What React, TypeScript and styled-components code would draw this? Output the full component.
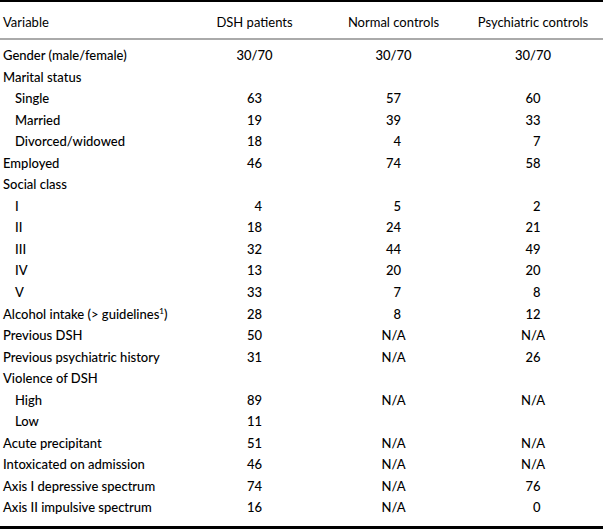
import styled, { createGlobalStyle } from 'styled-components';

const GlobalStyle = createGlobalStyle`
  html, body {
    margin: 0;
    padding: 0;
    background: #fff;
  }
  body {
    font-family: Lato, "Open Sans", sans-serif;
    color: #000;
  }
`

const Table = styled.div`
  width: 603px;
  border-top: 2px solid #000;
  border-bottom: 3px solid #000;
  font-size: 13px;
  font-weight: 500;
`

const Row = styled.div`
  display: grid;
  grid-template-columns: 185px 139px 139px 1fr;
  height: 21.55px;
  line-height: 21.55px;
  white-space: nowrap;
`

const HeaderRow = styled(Row)`
  height: 38px;
  line-height: 36px;
  padding-top: 2px;
  box-sizing: border-box;
  border-bottom: 2px solid #aaa;
  font-weight: 400;
`

const Body = styled.div`
  padding: 5px 0 7px;
`

const Label = styled.div<{ $indent?: boolean }>`
  padding-left: ${p => (p.$indent ? '15px' : '3px')};
`

const Cell = styled.div`
  text-align: center;
`

const Num = styled.span`
  display: inline-block;
  min-width: 15px;
  text-align: right;
`

const Sup = styled.sup`
  font-size: 8px;
  line-height: 0;
`

type Item = {
  label: React.ReactNode;
  sub?: boolean;
  v?: [string, string, string];
};

const rows: Item[] = [
  { label: 'Gender (male/female)', v: ['30/70', '30/70', '30/70'] },
  { label: 'Marital status' },
  { label: 'Single', sub: true, v: ['63', '57', '60'] },
  { label: 'Married', sub: true, v: ['19', '39', '33'] },
  { label: 'Divorced/widowed', sub: true, v: ['18', '4', '7'] },
  { label: 'Employed', v: ['46', '74', '58'] },
  { label: 'Social class' },
  { label: 'I', sub: true, v: ['4', '5', '2'] },
  { label: 'II', sub: true, v: ['18', '24', '21'] },
  { label: 'III', sub: true, v: ['32', '44', '49'] },
  { label: 'IV', sub: true, v: ['13', '20', '20'] },
  { label: 'V', sub: true, v: ['33', '7', '8'] },
  {
    label: (
      <>
        Alcohol intake (&gt; guidelines<Sup>1</Sup>)
      </>
    ),
    v: ['28', '8', '12'],
  },
  { label: 'Previous DSH', v: ['50', 'N/A', 'N/A'] },
  { label: 'Previous psychiatric history', v: ['31', 'N/A', '26'] },
  { label: 'Violence of DSH' },
  { label: 'High', sub: true, v: ['89', 'N/A', 'N/A'] },
  { label: 'Low', sub: true, v: ['11', '', ''] },
  { label: 'Acute precipitant', v: ['51', 'N/A', 'N/A'] },
  { label: 'Intoxicated on admission', v: ['46', 'N/A', 'N/A'] },
  { label: 'Axis I depressive spectrum', v: ['74', 'N/A', '76'] },
  { label: 'Axis II impulsive spectrum', v: ['16', 'N/A', '0'] },
];

const App = () => {
  return (
    <>
      <GlobalStyle />
      <Table>
        <HeaderRow>
          <Label>Variable</Label>
          <Cell>DSH patients</Cell>
          <Cell>Normal controls</Cell>
          <Cell>Psychiatric controls</Cell>
        </HeaderRow>
        <Body>
          {rows.map((r, i) => (
            <Row key={i}>
              <Label $indent={r.sub}>{r.label}</Label>
              {(r.v || ['', '', '']).map((val, j) => (
                <Cell key={j}>
                  <Num>{val}</Num>
                </Cell>
              ))}
            </Row>
          ))}
        </Body>
      </Table>
    </>
  );
};

export default App;
